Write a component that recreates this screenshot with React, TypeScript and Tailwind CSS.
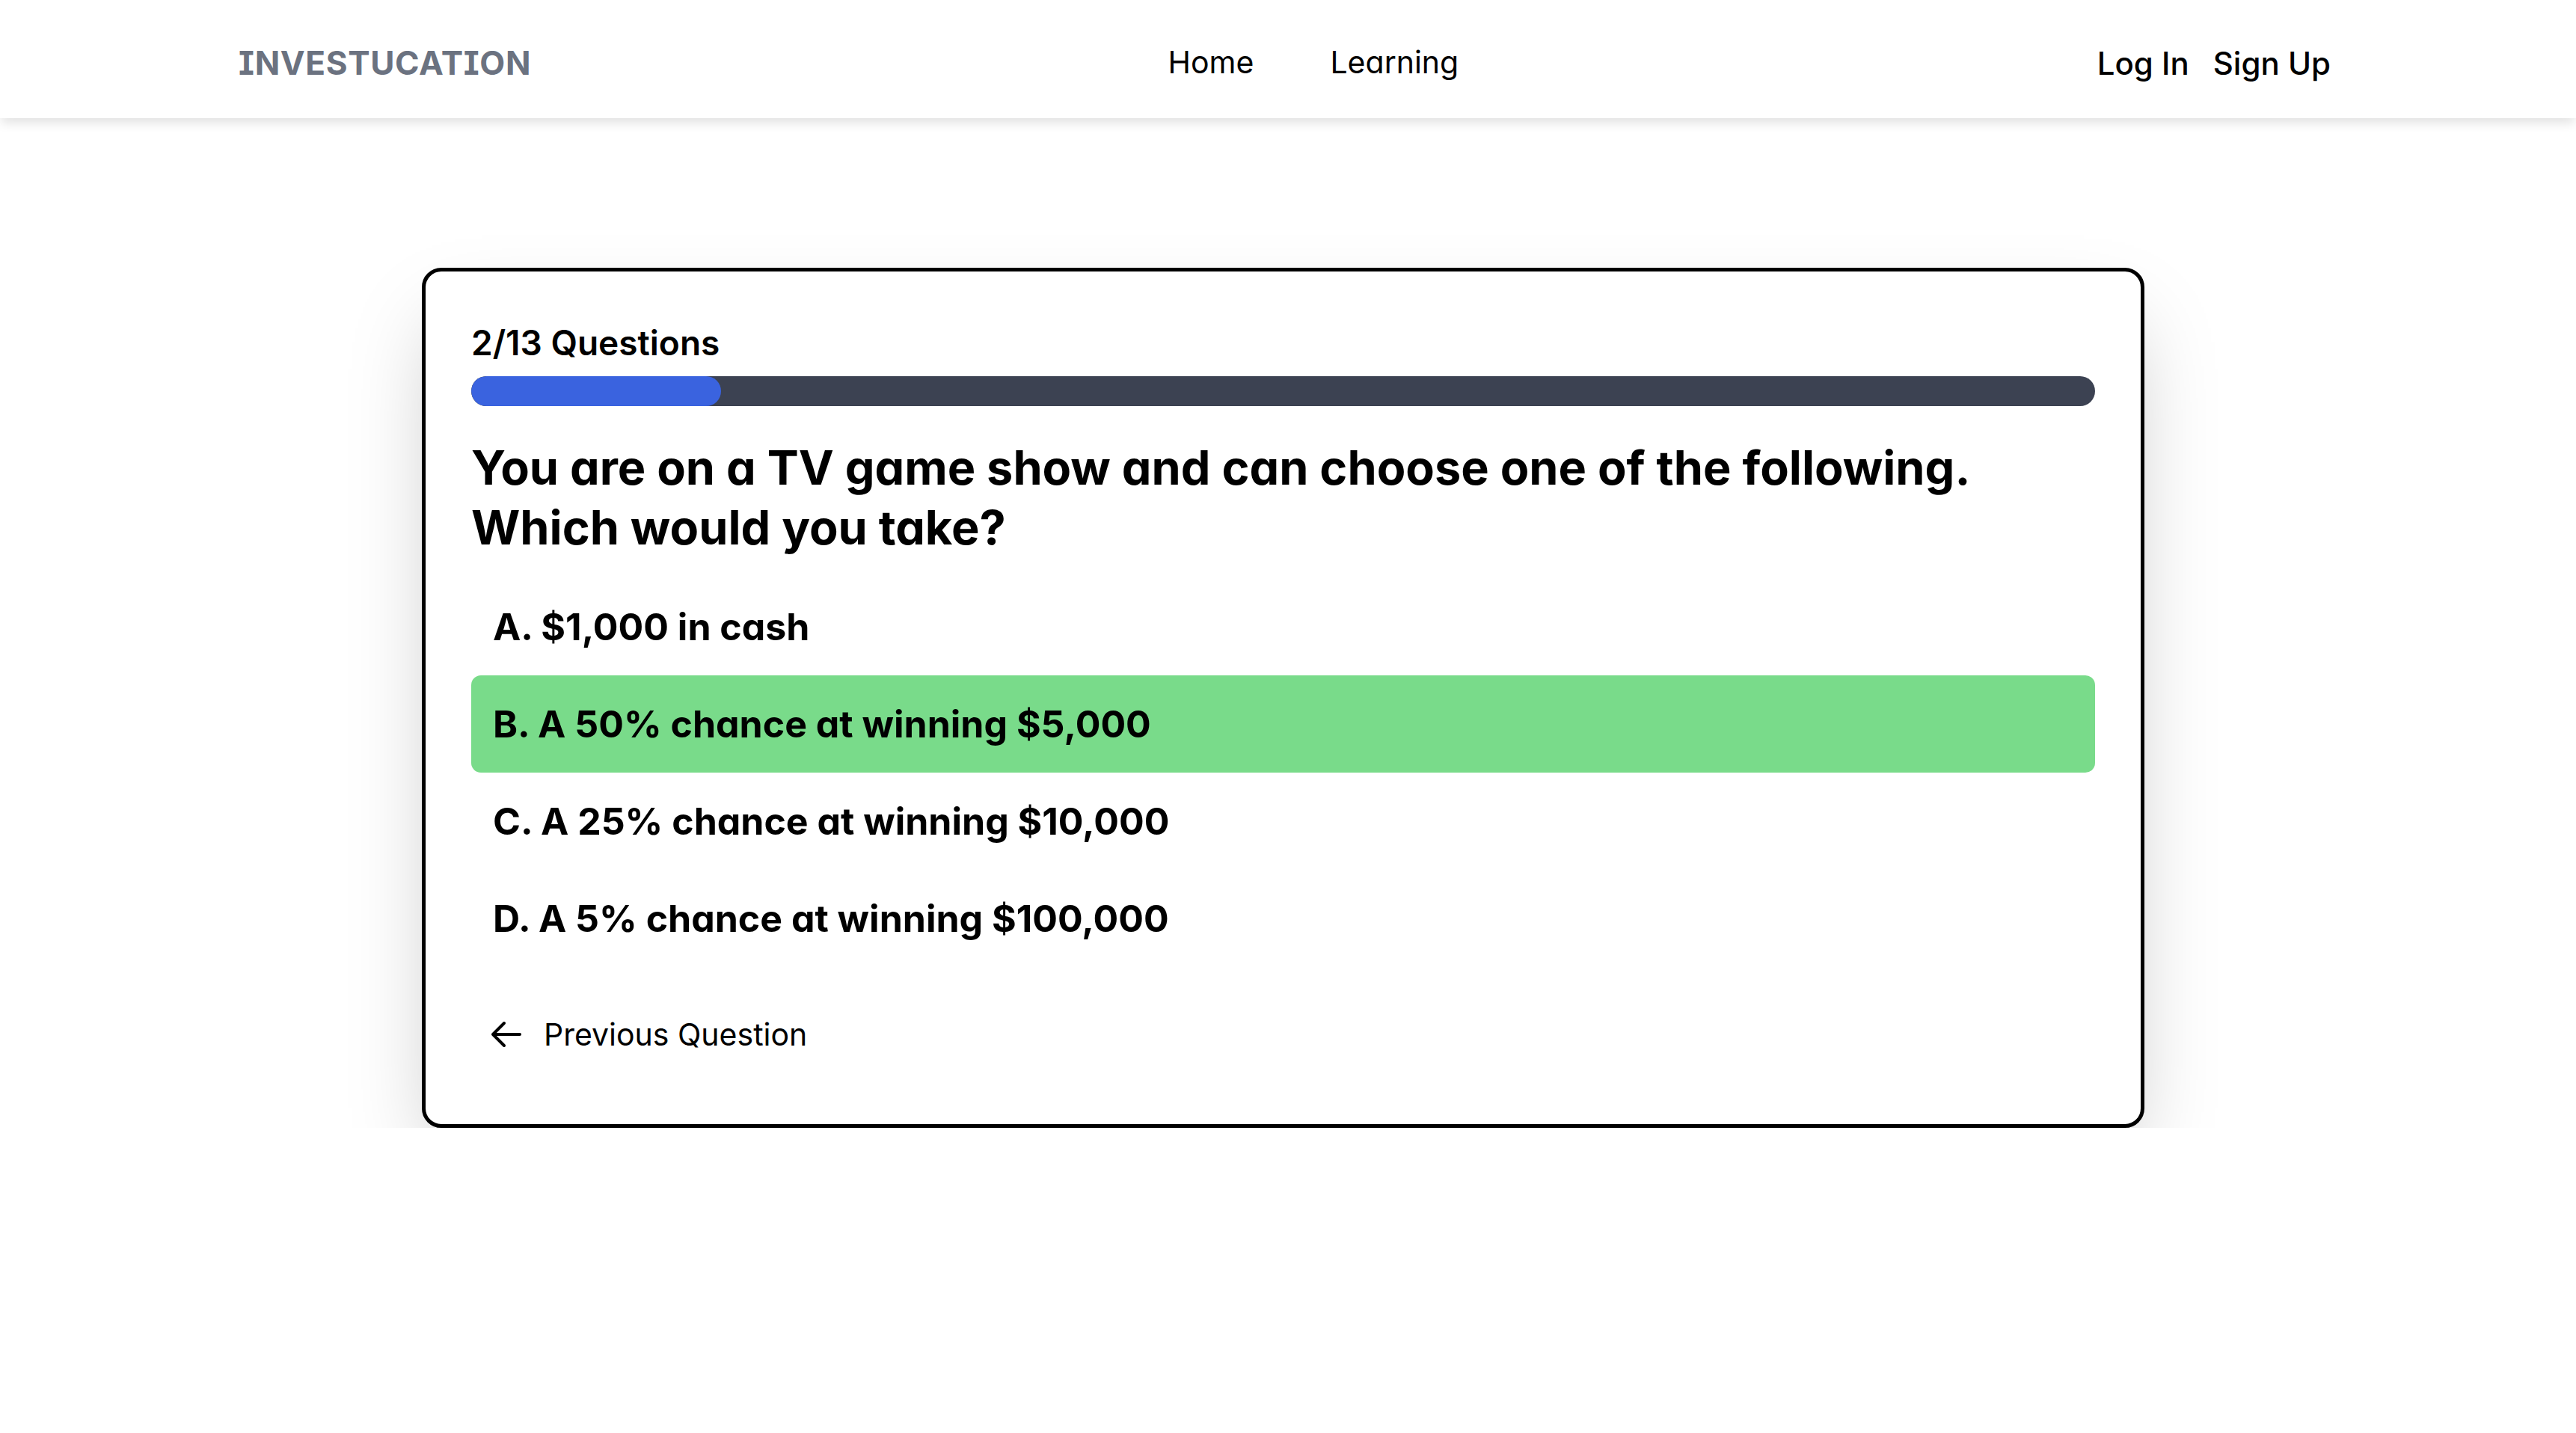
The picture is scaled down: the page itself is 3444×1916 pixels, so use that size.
import React from "react";

const options = [
  { label: "A. $1,000 in cash", selected: false },
  { label: "B. A 50% chance at winning $5,000", selected: true },
  { label: "C. A 25% chance at winning $10,000", selected: false },
  { label: "D. A 5% chance at winning $100,000", selected: false },
];

function ArrowLeft() {
  return (
    <svg
      width="48"
      height="48"
      viewBox="0 0 24 24"
      fill="none"
      stroke="currentColor"
      strokeWidth="2"
      strokeLinecap="round"
      strokeLinejoin="round"
    >
      <path d="M10.5 19.5 3 12m0 0 7.5-7.5M3 12h18" />
    </svg>
  );
}

export default function App() {
  const progress = (2 / 13) * 100;
  return (
    <div className="min-h-[1916px] w-full bg-white font-['Inter',sans-serif] text-black [font-feature-settings:'cv11']">
      <nav className="relative z-10 h-[158px] w-full bg-white pr-[9px] shadow-[0_8px_14px_-2px_rgba(0,0,0,0.12)]">
        <div className="mx-auto flex h-full w-[2797px] items-center justify-between pt-[10px]">
          <div className="text-[44px] font-bold tracking-[0.015em] text-[#6b7280] [font-feature-settings:'cv08','cv11']">
            INVESTUCATION
          </div>
          <div className="mr-[2px] flex items-center gap-[102px] text-[41px] font-normal">
            <a>Home</a>
            <a>Learning</a>
          </div>
          <div className="flex items-center gap-[32px] text-[42px] font-medium">
            <a>Log In</a>
            <a>Sign Up</a>
          </div>
        </div>
      </nav>

      <main className="overflow-hidden pt-[200px] pr-[13px]">
        <div className="mx-auto w-[2303px] rounded-[26px] border-[5px] border-black bg-white p-[61px] pt-[64px] shadow-[0_55px_110px_-26px_rgba(0,0,0,0.25)]">
          <div className="mb-[13px] text-[46px] leading-[63px] font-semibold">2/13 Questions</div>
          <div className="h-[40px] w-full overflow-hidden rounded-full bg-[#3c4252]">
            <div className="h-full rounded-full bg-[#3a63df]" style={{ width: `${progress}%` }} />
          </div>
          <h2 className="mt-[42px] text-[63px] leading-[80px] font-bold">
            You are on a TV game show and can choose one of the following.
            <br />
            Which would you take?
          </h2>
          <div className="mt-[28px] flex flex-col">
            {options.map((o) => (
              <div
                key={o.label}
                className={
                  o.selected
                    ? "rounded-[13px] bg-[#79db8a] px-[29px] py-[30px] text-[50px] leading-[70px] font-bold"
                    : "rounded-[13px] px-[29px] py-[30px] text-[50px] leading-[70px] font-bold"
                }
              >
                {o.label}
              </div>
            ))}
          </div>
          <button className="mt-[31px] flex items-center gap-[26px] px-[23px] py-[28px] text-[41px] leading-[62px] font-normal">
            <ArrowLeft />
            <span>Previous Question</span>
          </button>
        </div>
      </main>
    </div>
  );
}
